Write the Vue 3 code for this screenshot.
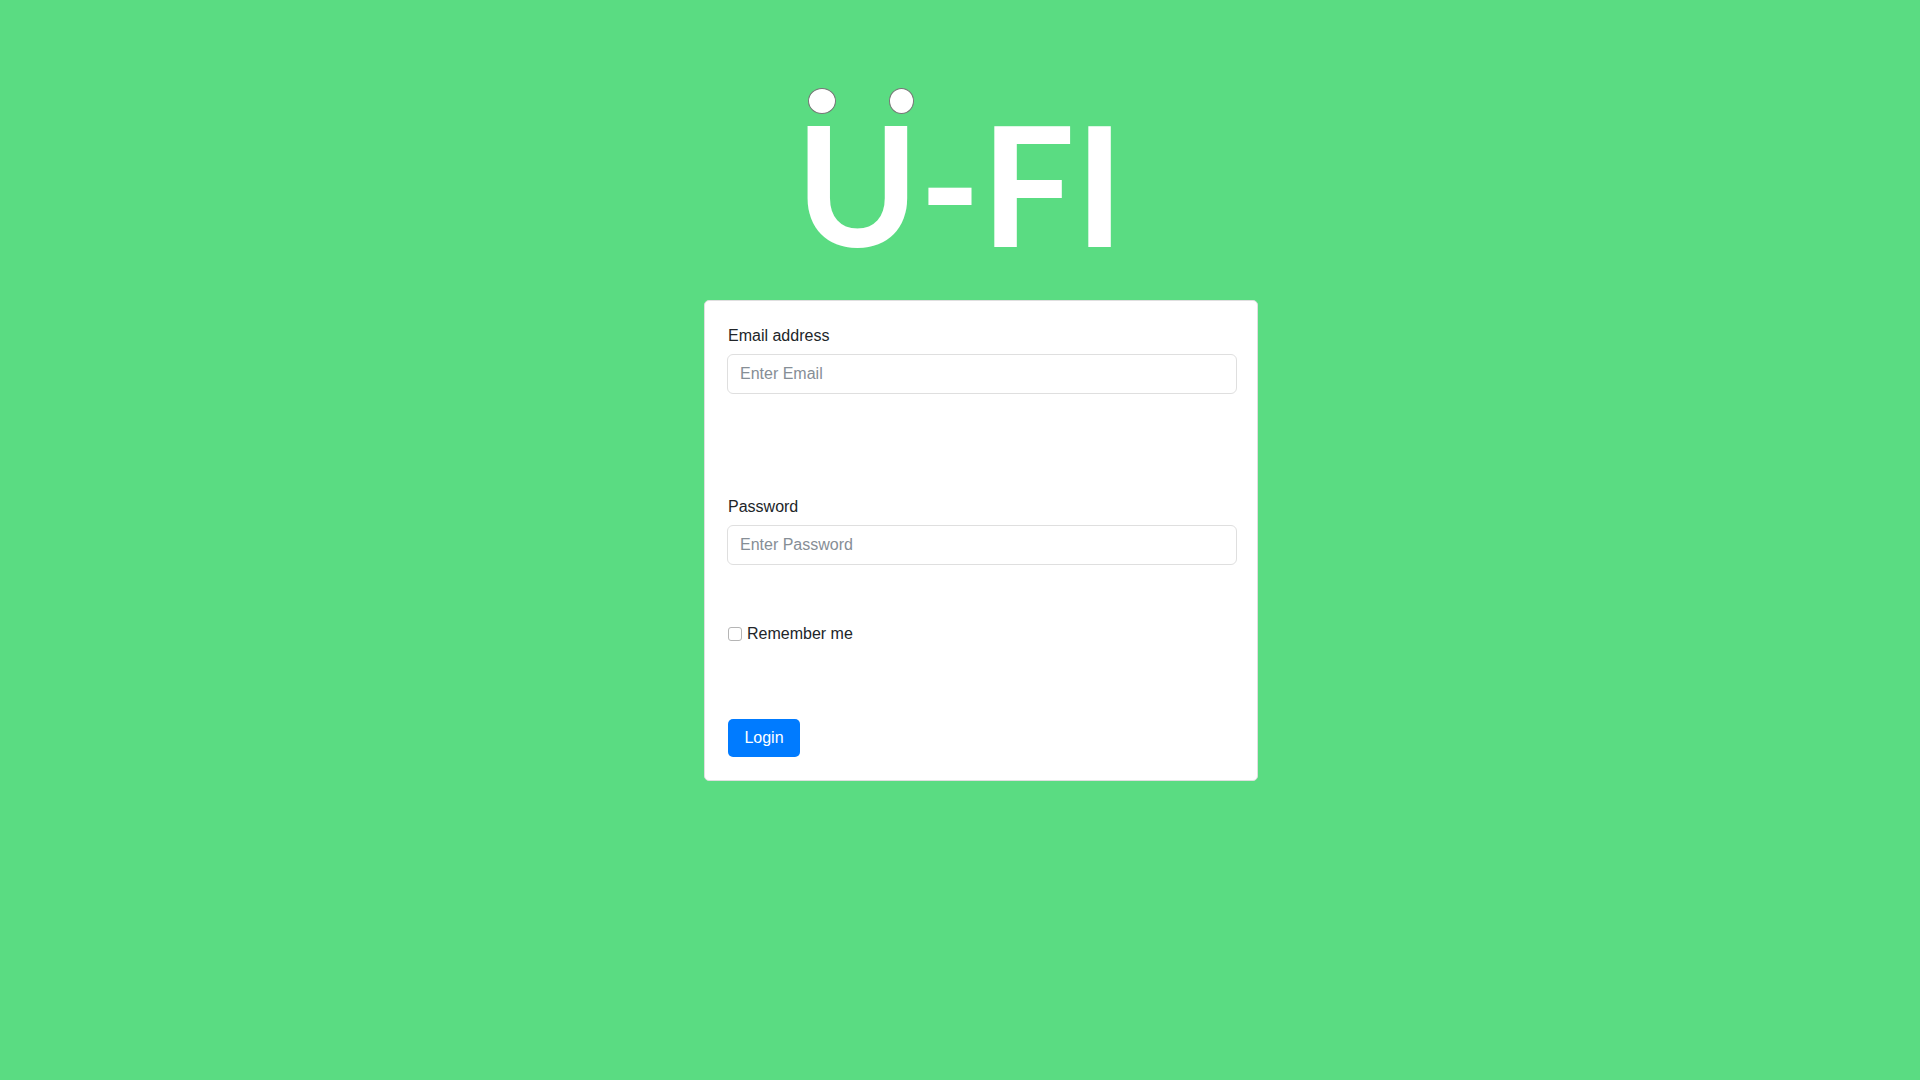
<script setup>
import { ref } from 'vue'

const email = ref('')
const password = ref('')
const remember = ref(false)
</script>

<template>
  <main class="page">
    <header class="brand">
      <div class="dots" aria-hidden="true">
        <span class="dot dot-wide"></span>
        <span class="dot"></span>
      </div>
      <h1 class="wordmark">U-FI</h1>
    </header>

    <div class="card-row">
      <form class="card" @submit.prevent>
        <div class="field">
          <label for="email">Email address</label>
          <input id="email" v-model="email" class="control" type="email" placeholder="Enter Email" />
        </div>
        <div class="field">
          <label for="password">Password</label>
          <input id="password" v-model="password" class="control" type="password" placeholder="Enter Password" />
        </div>
        <div class="remember">
          <input id="remember" v-model="remember" type="checkbox" />
          <label for="remember">Remember me</label>
        </div>
        <button class="login" type="submit">Login</button>
      </form>
    </div>
  </main>
</template>

<style>
body {
  margin: 0;
  background: #5adc82;
}
</style>

<style scoped>
.page {
  display: flex;
  flex-direction: column;
  align-items: center;
  box-sizing: border-box;
  min-height: 100vh;
  padding: 88px 16px;
  font-family: "Liberation Sans", Arial, sans-serif;
  font-size: 16px;
  line-height: 24px;
  color: #212529;
}

.brand {
  display: flex;
  flex-direction: column;
  margin-bottom: 48px;
}

.dots {
  display: flex;
  gap: 53px;
  padding-left: 12px;
}

.dot {
  box-sizing: border-box;
  width: 25px;
  height: 26px;
  border: 1px solid #767676;
  border-radius: 50%;
  background: #fff;
}

.dot-wide {
  width: 28px;
}

.wordmark {
  margin: 0;
  font-family: Lato, "Liberation Sans", sans-serif;
  font-size: 166px;
  font-weight: 700;
  line-height: 138px;
  color: #fff;
}

.card-row {
  display: flex;
  justify-content: center;
  box-sizing: border-box;
  width: 100%;
  padding-left: 42px;
}

.card {
  box-sizing: border-box;
  width: 100%;
  max-width: 554px;
  padding: 23px 20px 23px 22px;
  border: 1px solid #dfdfdf;
  border-radius: 5px;
  background: #fff;
}

.field {
  margin-bottom: 101px;
}

.field + .field {
  margin-bottom: 57px;
}

.field label {
  display: block;
  margin: 0 1px 6px;
}

.control {
  display: block;
  box-sizing: border-box;
  width: 100%;
  height: 40px;
  padding: 0 12px;
  border: 1px solid #dfdfdf;
  border-radius: 6px;
  background: #fff;
  color: #495057;
  font: inherit;
}

.control::placeholder {
  color: #868e96;
  opacity: 1;
}

.remember {
  display: flex;
  align-items: center;
  gap: 5px;
  margin: 0 1px 73px;
}

.remember input {
  appearance: none;
  box-sizing: border-box;
  width: 14px;
  height: 14px;
  margin: 0;
  border: 1px solid #b5b5b5;
  border-radius: 3px;
  background: #fff;
}

.remember input:checked {
  border-color: #007bff;
  background: #007bff;
}

.login {
  display: block;
  min-width: 72px;
  height: 38px;
  margin: 0 1px;
  padding: 0 16px;
  border: 0;
  border-radius: 5px;
  background: #007bff;
  color: #fff;
  font: inherit;
  cursor: pointer;
}
</style>
